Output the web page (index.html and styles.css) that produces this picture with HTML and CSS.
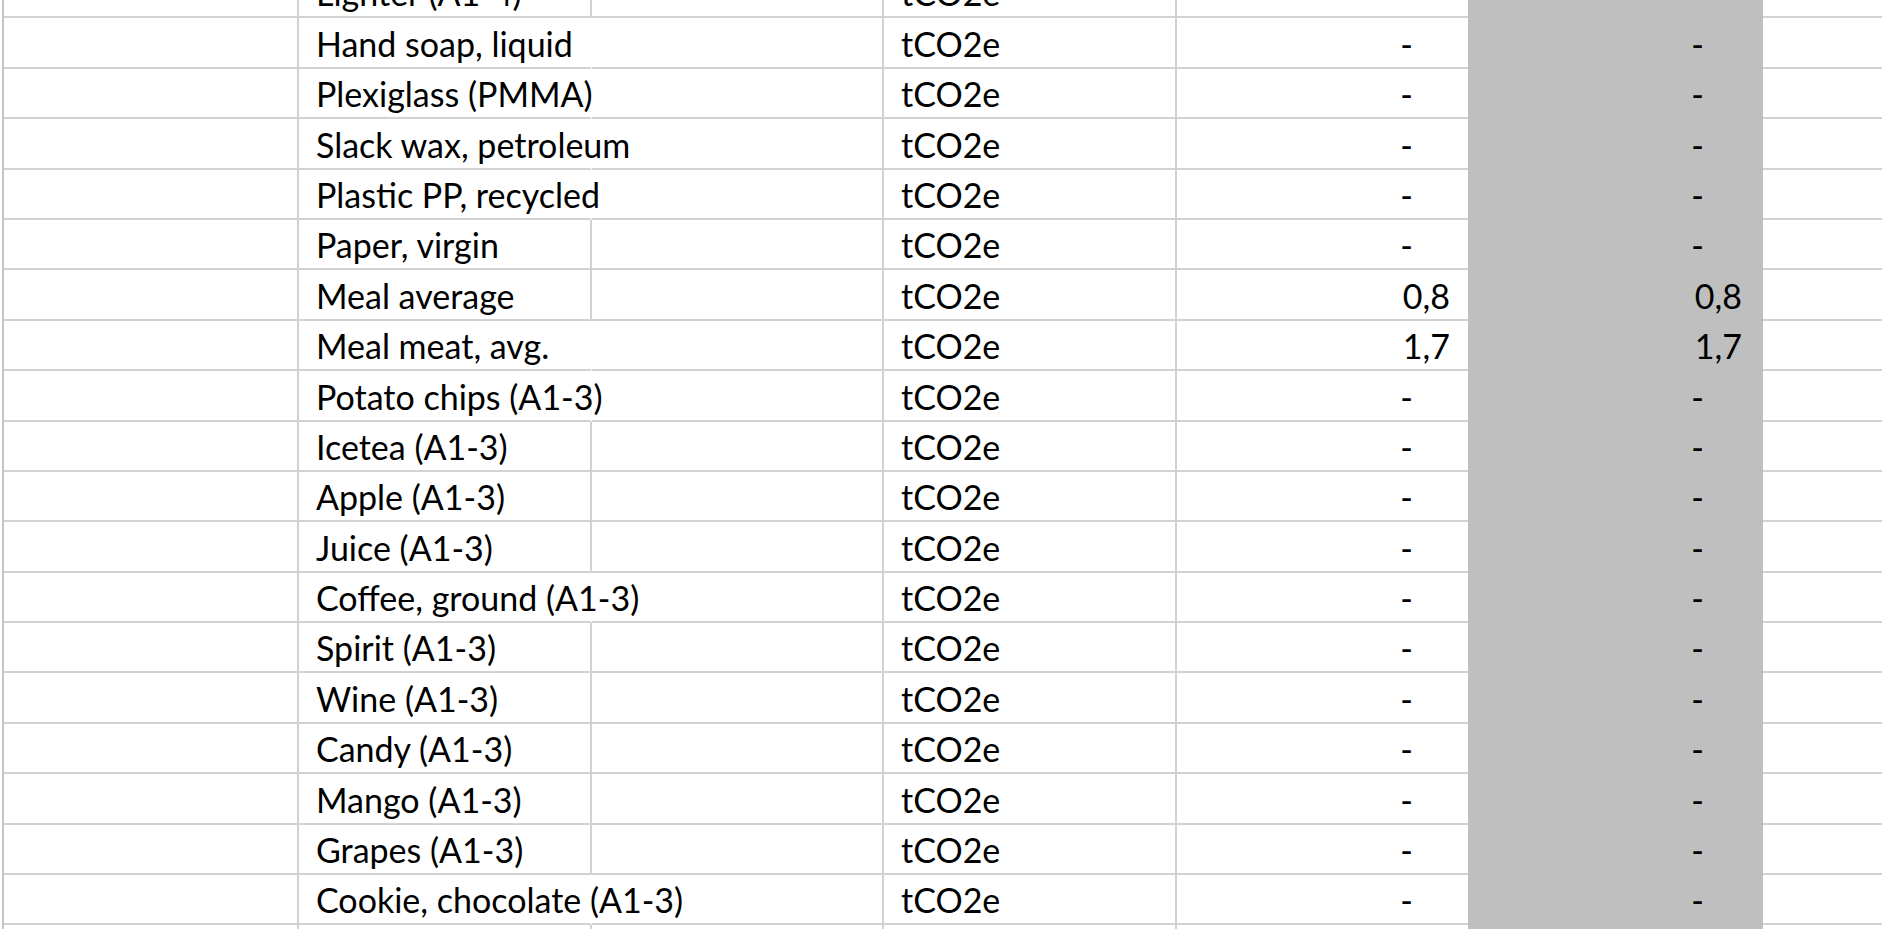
FILE: index.html
```html
<!DOCTYPE html>
<html lang="en">
<head>
<meta charset="utf-8">
<title>Emission factors</title>
<link rel="stylesheet" href="styles.css">
</head>
<body>
<div class="sheet">
  <div class="row"><div class="c a"></div><div class="c b">Lighter (A1-4)</div><div class="c cc"></div><div class="c d">tCO2e</div><div class="c e dash">-</div><div class="c f dash">-</div><div class="c g"></div></div>
  <div class="row ov"><div class="c a"></div><div class="c b">Hand soap, liquid</div><div class="c cc"></div><div class="c d">tCO2e</div><div class="c e dash">-</div><div class="c f dash">-</div><div class="c g"></div></div>
  <div class="row ov"><div class="c a"></div><div class="c b">Plexiglass (PMMA)</div><div class="c cc"></div><div class="c d">tCO2e</div><div class="c e dash">-</div><div class="c f dash">-</div><div class="c g"></div></div>
  <div class="row ov"><div class="c a"></div><div class="c b">Slack wax, petroleum</div><div class="c cc"></div><div class="c d">tCO2e</div><div class="c e dash">-</div><div class="c f dash">-</div><div class="c g"></div></div>
  <div class="row ov"><div class="c a"></div><div class="c b">Plastic PP, recycled</div><div class="c cc"></div><div class="c d">tCO2e</div><div class="c e dash">-</div><div class="c f dash">-</div><div class="c g"></div></div>
  <div class="row"><div class="c a"></div><div class="c b">Paper, virgin</div><div class="c cc"></div><div class="c d">tCO2e</div><div class="c e dash">-</div><div class="c f dash">-</div><div class="c g"></div></div>
  <div class="row"><div class="c a"></div><div class="c b">Meal average</div><div class="c cc"></div><div class="c d">tCO2e</div><div class="c e num">0,8</div><div class="c f num">0,8</div><div class="c g"></div></div>
  <div class="row ov"><div class="c a"></div><div class="c b">Meal meat, avg.</div><div class="c cc"></div><div class="c d">tCO2e</div><div class="c e num">1,7</div><div class="c f num">1,7</div><div class="c g"></div></div>
  <div class="row ov"><div class="c a"></div><div class="c b">Potato chips (A1-3)</div><div class="c cc"></div><div class="c d">tCO2e</div><div class="c e dash">-</div><div class="c f dash">-</div><div class="c g"></div></div>
  <div class="row"><div class="c a"></div><div class="c b">Icetea (A1-3)</div><div class="c cc"></div><div class="c d">tCO2e</div><div class="c e dash">-</div><div class="c f dash">-</div><div class="c g"></div></div>
  <div class="row"><div class="c a"></div><div class="c b">Apple (A1-3)</div><div class="c cc"></div><div class="c d">tCO2e</div><div class="c e dash">-</div><div class="c f dash">-</div><div class="c g"></div></div>
  <div class="row"><div class="c a"></div><div class="c b">Juice (A1-3)</div><div class="c cc"></div><div class="c d">tCO2e</div><div class="c e dash">-</div><div class="c f dash">-</div><div class="c g"></div></div>
  <div class="row ov"><div class="c a"></div><div class="c b">Coffee, ground (A1-3)</div><div class="c cc"></div><div class="c d">tCO2e</div><div class="c e dash">-</div><div class="c f dash">-</div><div class="c g"></div></div>
  <div class="row"><div class="c a"></div><div class="c b">Spirit (A1-3)</div><div class="c cc"></div><div class="c d">tCO2e</div><div class="c e dash">-</div><div class="c f dash">-</div><div class="c g"></div></div>
  <div class="row"><div class="c a"></div><div class="c b">Wine (A1-3)</div><div class="c cc"></div><div class="c d">tCO2e</div><div class="c e dash">-</div><div class="c f dash">-</div><div class="c g"></div></div>
  <div class="row"><div class="c a"></div><div class="c b">Candy (A1-3)</div><div class="c cc"></div><div class="c d">tCO2e</div><div class="c e dash">-</div><div class="c f dash">-</div><div class="c g"></div></div>
  <div class="row"><div class="c a"></div><div class="c b">Mango (A1-3)</div><div class="c cc"></div><div class="c d">tCO2e</div><div class="c e dash">-</div><div class="c f dash">-</div><div class="c g"></div></div>
  <div class="row"><div class="c a"></div><div class="c b">Grapes (A1-3)</div><div class="c cc"></div><div class="c d">tCO2e</div><div class="c e dash">-</div><div class="c f dash">-</div><div class="c g"></div></div>
  <div class="row ov"><div class="c a"></div><div class="c b">Cookie, chocolate (A1-3)</div><div class="c cc"></div><div class="c d">tCO2e</div><div class="c e dash">-</div><div class="c f dash">-</div><div class="c g"></div></div>
  <div class="row"><div class="c a"></div><div class="c b"></div><div class="c cc"></div><div class="c d"></div><div class="c e"></div><div class="c f"></div><div class="c g"></div></div>
</div>
</body>
</html>
```

FILE: styles.css
```css
html, body {
  margin: 0;
  padding: 0;
  background: #ffffff;
  overflow: hidden;
  height: 929px;
}

.sheet {
  margin-top: -32px;
  margin-left: 2px;
  border-left: 2px solid #c4c4c4;
  font-family: "Lato", "Liberation Sans", sans-serif;
  font-size: 34px;
  color: #000000;
}

.row {
  display: grid;
  grid-template-columns: 295px 293px 292px 293px 291px 295px 1fr;
  height: 50.4px;
}

.c {
  box-sizing: border-box;
  height: 50.4px;
  border-bottom: 2px solid #d2d2d2;
  border-right: 2px solid #d2d2d2;
  display: flex;
  align-items: flex-end;
  padding-bottom: 6px;
  line-height: 1;
  white-space: nowrap;
}

.b {
  padding-left: 17px;
  overflow: visible;
}

.ov .b {
  border-right-color: transparent;
}

.d {
  padding-left: 17px;
}

.e {
  border-right: none;
  justify-content: flex-end;
}

.f {
  background: #bfbfbf;
  border-bottom-color: #bfbfbf;
  border-right: none;
  justify-content: flex-end;
}

.g {
  border-right: none;
}

.e.num {
  padding-right: 18px;
}

.e.dash {
  padding-right: 55px;
}

.f.num {
  padding-right: 21px;
}

.f.dash {
  padding-right: 59px;
}
```
